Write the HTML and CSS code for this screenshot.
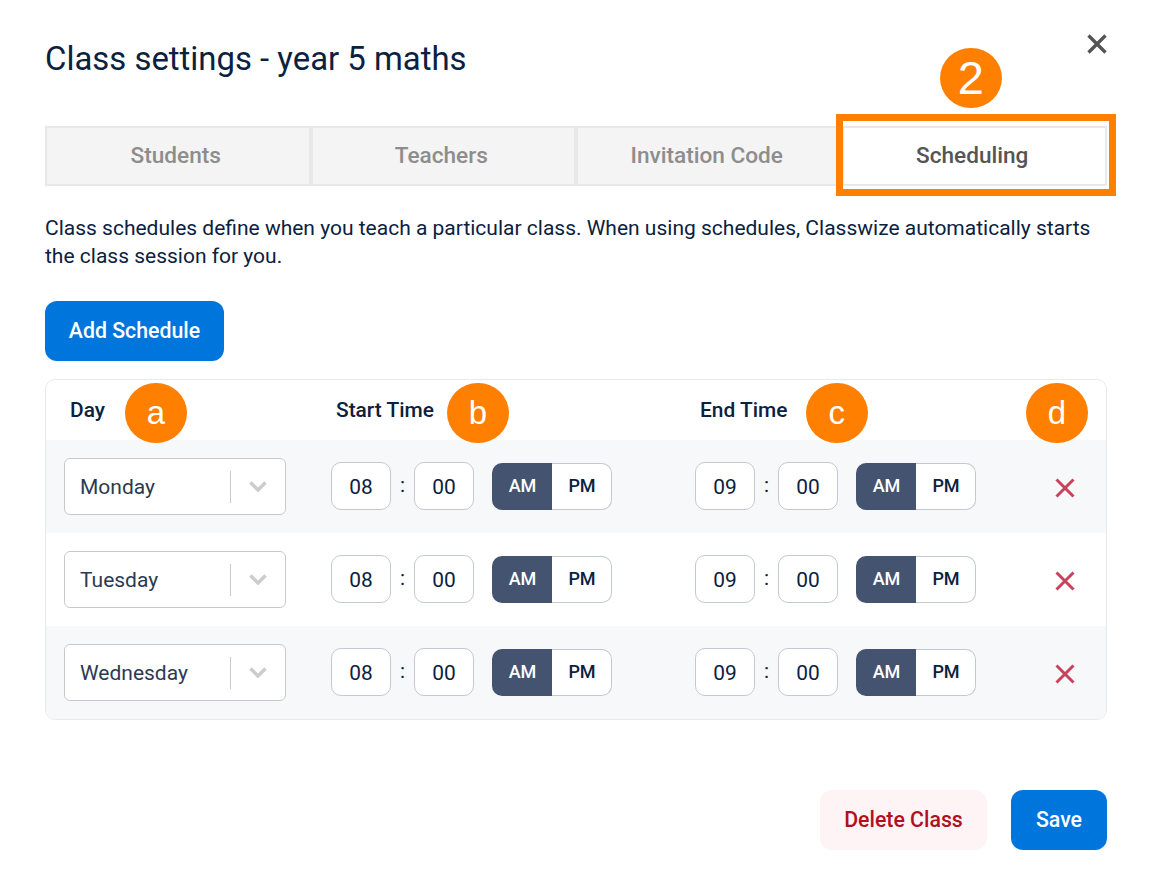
FILE: index.html
```html
<!DOCTYPE html>
<html lang="en">
<head>
<meta charset="utf-8">
<title>Class settings</title>
<link rel="stylesheet" href="styles.css">
</head>
<body>
<main class="dialog">
  <header class="head">
    <h1 class="title">Class settings - year 5 maths</h1>
    <svg class="close" width="20" height="20" viewBox="0 0 20 20"><path d="M1.5 1.5 18.5 18.5M18.5 1.5 1.5 18.5"/></svg>
  </header>
  <nav class="tabs">
    <div class="tab">Students</div>
    <div class="tab">Teachers</div>
    <div class="tab">Invitation Code</div>
    <div class="tab active">Scheduling</div>
  </nav>
  <p class="intro">Class schedules define when you teach a particular class. When using schedules, Classwize automatically starts the class session for you.</p>
  <button class="btn primary add">Add Schedule</button>
  <section class="table">
    <div class="row thead">
      <div class="th th-day">Day</div>
      <div class="th">Start Time</div>
      <div class="th">End Time</div>
    </div>
    <div class="row shaded">
      <div class="select"><span class="select-value">Monday</span><span class="sep"></span><svg class="chev" width="18" height="11" viewBox="0 0 18 11"><path d="M1.5 1.5 9 9l7.500-7.500"/></svg></div>
      <div class="time"><span class="num">08</span><span class="colon">:</span><span class="num">00</span><div class="ampm"><span class="am">AM</span><span class="pm">PM</span></div></div>
      <div class="time"><span class="num">09</span><span class="colon">:</span><span class="num">00</span><div class="ampm"><span class="am">AM</span><span class="pm">PM</span></div></div>
      <svg class="del" width="20" height="20" viewBox="0 0 20 20"><path d="M1.500 1.500 18.500 18.500M18.500 1.500 1.500 18.500"/></svg>
    </div>
    <div class="row">
      <div class="select"><span class="select-value">Tuesday</span><span class="sep"></span><svg class="chev" width="18" height="11" viewBox="0 0 18 11"><path d="M1.5 1.5 9 9l7.500-7.500"/></svg></div>
      <div class="time"><span class="num">08</span><span class="colon">:</span><span class="num">00</span><div class="ampm"><span class="am">AM</span><span class="pm">PM</span></div></div>
      <div class="time"><span class="num">09</span><span class="colon">:</span><span class="num">00</span><div class="ampm"><span class="am">AM</span><span class="pm">PM</span></div></div>
      <svg class="del" width="20" height="20" viewBox="0 0 20 20"><path d="M1.500 1.500 18.500 18.500M18.500 1.500 1.500 18.500"/></svg>
    </div>
    <div class="row shaded">
      <div class="select"><span class="select-value">Wednesday</span><span class="sep"></span><svg class="chev" width="18" height="11" viewBox="0 0 18 11"><path d="M1.5 1.5 9 9l7.500-7.500"/></svg></div>
      <div class="time"><span class="num">08</span><span class="colon">:</span><span class="num">00</span><div class="ampm"><span class="am">AM</span><span class="pm">PM</span></div></div>
      <div class="time"><span class="num">09</span><span class="colon">:</span><span class="num">00</span><div class="ampm"><span class="am">AM</span><span class="pm">PM</span></div></div>
      <svg class="del" width="20" height="20" viewBox="0 0 20 20"><path d="M1.500 1.500 18.500 18.500M18.500 1.500 1.500 18.500"/></svg>
    </div>
  </section>
  <footer class="foot">
    <button class="btn danger">Delete Class</button>
    <button class="btn primary save">Save</button>
  </footer>
</main>
<div class="highlight"></div>
<div class="badge badge-2">2</div>
<div class="badge badge-a">a</div>
<div class="badge badge-b">b</div>
<div class="badge badge-c">c</div>
<div class="badge badge-d">d</div>
</body>
</html>
```
FILE: styles.css
```css
* { box-sizing: border-box; }
html, body { margin: 0; padding: 0; background: #fff; }
body {
  width: 1150px;
  height: 890px;
  position: relative;
  overflow: hidden;
  font-family: Roboto, "Liberation Sans", sans-serif;
  color: #0b2140;
}
.dialog { padding: 0 43px 0 45px; }
.head {
  height: 126px;
  display: flex;
  justify-content: space-between;
  align-items: flex-start;
}
.title {
  margin: 39px 0 0;
  font-size: 32.9px;
  line-height: 40px;
  font-weight: 400;
  color: #0b2140;
}
.close { margin: 34px 0 0; fill: none; stroke: #555; stroke-width: 3.4; }
.tabs { display: grid; grid-template-columns: repeat(4, 1fr); height: 60px; }
.tab {
  display: flex;
  align-items: center;
  justify-content: center;
  background: #f4f4f4;
  border: 2px solid #e8e8e8;
  padding: 0 4px 2px 0;
  font-size: 22.6px;
  font-weight: 500;
  color: #8d8d8d;
}
.tab.active { background: #fff; color: #555; }
.intro {
  margin: 28px 0 0;
  font-size: 21px;
  line-height: 28px;
  color: #0b2140;
}
.btn {
  border: 0;
  height: 60px;
  border-radius: 12px;
  font-family: inherit;
  font-size: 21.3px;
  font-weight: 500;
  padding: 0 0 1px;
}
.primary { background: #0075db; color: #fff; }
.danger { width: 167px; background: #fff4f5; color: #b0101f; }
.save { width: 96px; }
.add { display: block; width: 179px; margin-top: 31px; }
.table {
  margin-top: 18px;
  border: 1px solid #e8eaed;
  border-radius: 10px;
  overflow: hidden;
  height: 341px;
}
.row {
  display: grid;
  grid-template-columns: 267px 364px 1fr;
  align-items: center;
  height: 93px;
  padding-left: 18px;
  position: relative;
}
.thead { height: 60px; }
.shaded { background: #f7f8fa; }
.th { font-size: 20.9px; font-weight: 500; padding-left: 5px; color: #0b2140; }
.th-day { padding-left: 6px; }
.select {
  width: 222px;
  height: 57px;
  background: #fff;
  border: 1px solid #c9c9c9;
  border-radius: 6px;
  display: flex;
  align-items: center;
  padding-left: 15px;
  font-size: 21px;
}
.select-value { flex: 1; color: #2b3a52; }
.sep { width: 1px; height: 32px; background: #c9c9c9; margin-right: 18px; }
.chev { margin-right: 18px; fill: none; stroke: #cccccc; stroke-width: 3.5; }
.time { display: flex; align-items: flex-start; align-self: start; margin-top: 22px; }
.num {
  width: 60px;
  height: 48px;
  background: #fff;
  border: 1px solid #c3c8d2;
  border-radius: 10px;
  display: flex;
  align-items: center;
  justify-content: center;
  padding-top: 1px;
  font-size: 20.9px;
}
.colon { width: 23px; height: 48px; line-height: 47px; text-align: center; font-size: 20.9px; }
.ampm { display: flex; margin: 1px 0 0 18px; height: 47px; }
.am, .pm {
  width: 60px;
  display: flex;
  align-items: center;
  justify-content: center;
  font-size: 18px;
  font-weight: 500;
  padding-left: 1px;
  padding-bottom: 2px;
}
.am { background: #44536f; color: #fff; border-radius: 10px 0 0 10px; }
.pm { background: #fff; border: 1px solid #c3c8d2; border-left: 0; border-radius: 0 10px 10px 0; }
.del {
  position: absolute;
  left: 1009px;
  top: 38px;
  fill: none;
  stroke: #c9415a;
  stroke-width: 3;
}
.foot { display: flex; justify-content: flex-end; gap: 24px; margin-top: 70px; }
.highlight {
  position: absolute;
  left: 836px;
  top: 114px;
  width: 280px;
  height: 82px;
  border: 7px solid #ff8000;
}
.badge {
  position: absolute;
  width: 61.5px;
  height: 60px;
  top: 383.3px;
  border-radius: 50%;
  background: #ff8000;
  color: #fff;
  font-family: "Liberation Sans", Arial, sans-serif;
  display: flex;
  align-items: center;
  justify-content: center;
  font-size: 33px;
}
.badge-2 { left: 940px; top: 47.5px; font-size: 47px; }
.badge-a { left: 125.3px; }
.badge-b { left: 447.3px; }
.badge-c { left: 806px; }
.badge-d { left: 1026.3px; }
```
